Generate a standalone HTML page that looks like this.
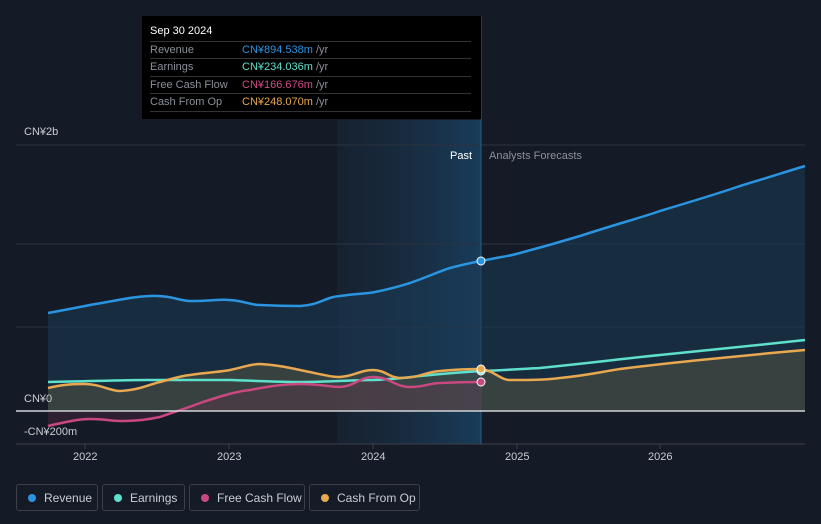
<!DOCTYPE html>
<html><head><style>
body{margin:0;width:821px;height:524px;background:#151b26;font-family:"Liberation Sans",sans-serif;overflow:hidden;position:relative}
.tt{position:absolute;left:142px;top:16px;width:339px;height:103px;background:#000;font-size:11px;color:#8a8f98}
.tt .h{position:absolute;left:8px;top:9px;color:#fff;font-size:11px}
.tt .r{position:absolute;left:8px;width:321px;height:17px;border-top:1px solid #333;line-height:17px}
.tt .r span{position:absolute;left:92px}
.lg{position:absolute;top:484px;height:27px;border:1px solid #3a3f4a;border-radius:3px;color:#c8ccd2;font-size:12px;line-height:27px;box-sizing:border-box}
.lg i{position:absolute;left:11px;top:9px;width:8px;height:8px;border-radius:50%}
.lg b{font-weight:normal;position:absolute;left:27px}
.ax{position:absolute;color:#c8ccd2;font-size:11px}
</style></head><body>
<svg width="821" height="524" style="position:absolute;left:0;top:0">
<defs>
<linearGradient id="pg" x1="0" x2="1"><stop offset="0" stop-color="#1a3046" stop-opacity=".3"/><stop offset="1" stop-color="#1a4a70" stop-opacity=".7"/></linearGradient>
</defs>
<rect x="337" y="120" width="144" height="324" fill="url(#pg)"/>
<line x1="16" y1="145" x2="805" y2="145" stroke="#2c323d"/>
<line x1="16" y1="244" x2="805" y2="244" stroke="#2c323d"/>
<line x1="16" y1="327" x2="805" y2="327" stroke="#2c323d"/>
<line x1="16" y1="444" x2="805" y2="444" stroke="#3a3f4a"/>
<g stroke="#3a3f4a"><line x1="85" y1="444" x2="85" y2="449"/><line x1="229" y1="444" x2="229" y2="449"/><line x1="373" y1="444" x2="373" y2="449"/><line x1="517" y1="444" x2="517" y2="449"/><line x1="660" y1="444" x2="660" y2="449"/></g>
<line x1="481" y1="16" x2="481" y2="444" stroke="#2a5a80"/>
<path d="M48,313 C70,309 80,307 90,305 C120,300 130,297 150,296 C170,295 180,301 190,301 C210,301 220,299 230,300 C245,301 250,305 260,305 C280,306 290,306 300,306 C320,305 325,297 340,296 C360,293 365,294 375,292 C395,288 400,286 410,283 C430,276 440,271 450,268 C465,264 470,263 481,261 C500,257 510,256 520,253 C550,245 560,242 580,236 C620,223 640,218 660,211 C700,199 720,193 740,186 C770,177 785,172 805,166 L805,411 L48,411Z" fill="#1c3a56" fill-opacity=".55"/>
<path d="M48,388 C65,384 75,384 85,384 C100,384 110,391 120,391 C140,390 150,384 160,382 C175,378 180,376 190,375 C210,372 220,372 230,370 C245,367 250,364 260,364 C280,365 290,368 300,370 C320,374 330,377 340,377 C355,376 360,370 373,370 C385,370 390,378 400,378 C420,378 425,372 440,371 C460,369 470,369 481,369 C495,371 500,380 510,380 C530,380 545,380 560,378 C590,375 600,372 620,369 C660,364 680,362 700,360 C740,356 770,353 805,350 L805,411 L48,411Z" fill="#5a5a40" fill-opacity=".45"/>
<path d="M48,426 C70,421 80,419 90,419 C105,419 110,421 120,421 C140,421 150,419 160,417 C180,410 190,407 200,403 C230,393 240,391 250,390 C270,386 285,384 300,384 C320,384 330,387 340,387 C355,386 360,377 373,377 C390,377 395,387 410,387 C425,387 430,383 440,383 C460,382 470,382 481,382 L481,411 L48,411Z" fill="#7a3050" fill-opacity=".25"/>
<g fill="none" stroke-width="2.5">
<path d="M48,313 C70,309 80,307 90,305 C120,300 130,297 150,296 C170,295 180,301 190,301 C210,301 220,299 230,300 C245,301 250,305 260,305 C280,306 290,306 300,306 C320,305 325,297 340,296 C360,293 365,294 375,292 C395,288 400,286 410,283 C430,276 440,271 450,268 C465,264 470,263 481,261 C500,257 510,256 520,253 C550,245 560,242 580,236 C620,223 640,218 660,211 C700,199 720,193 740,186 C770,177 785,172 805,166" stroke="#2a94e0"/>
<path d="M48,382 C100,381 120,380 150,380 C190,380 210,380 230,380 C260,381 280,382 300,382 C330,382 350,380 373,380 C400,379 410,377 420,376 C450,373 465,372 481,371 C510,370 520,369 540,368 C600,362 620,359 660,355 C720,349 760,345 805,340" stroke="#5ee0cc"/>
<path d="M48,426 C70,421 80,419 90,419 C105,419 110,421 120,421 C140,421 150,419 160,417 C180,410 190,407 200,403 C230,393 240,391 250,390 C270,386 285,384 300,384 C320,384 330,387 340,387 C355,386 360,377 373,377 C390,377 395,387 410,387 C425,387 430,383 440,383 C460,382 470,382 481,382" stroke="#c8487f"/>
<path d="M48,388 C65,384 75,384 85,384 C100,384 110,391 120,391 C140,390 150,384 160,382 C175,378 180,376 190,375 C210,372 220,372 230,370 C245,367 250,364 260,364 C280,365 290,368 300,370 C320,374 330,377 340,377 C355,376 360,370 373,370 C385,370 390,378 400,378 C420,378 425,372 440,371 C460,369 470,369 481,369 C495,371 500,380 510,380 C530,380 545,380 560,378 C590,375 600,372 620,369 C660,364 680,362 700,360 C740,356 770,353 805,350" stroke="#e8a850"/>
</g>
<line x1="16" y1="411" x2="805" y2="411" stroke="#d0d3d8" stroke-width="1.5"/>
<circle cx="481" cy="261" r="4" fill="#2a94e0" stroke="#fff"/>
<circle cx="481" cy="371" r="4" fill="#5ee0cc" stroke="#fff"/>
<circle cx="481" cy="369" r="4" fill="#e8a850" stroke="#fff"/>
<circle cx="481" cy="382" r="4" fill="#c8487f" stroke="#fff"/>
</svg>
<div class="ax" style="left:24px;top:126px">CN¥2b</div>
<div class="ax" style="left:24px;top:393px">CN¥0</div>
<div class="ax" style="left:24px;top:426px">-CN¥200m</div>
<div class="ax" style="left:450px;top:150px;color:#fff">Past</div>
<div class="ax" style="left:489px;top:150px;color:#8a8f98">Analysts Forecasts</div>
<div class="ax" style="left:73px;top:451px">2022</div>
<div class="ax" style="left:217px;top:451px">2023</div>
<div class="ax" style="left:361px;top:451px">2024</div>
<div class="ax" style="left:505px;top:451px">2025</div>
<div class="ax" style="left:648px;top:451px">2026</div>
<div class="tt">
<div class="h">Sep 30 2024</div>
<div class="r" style="top:25px">Revenue<span style="color:#2a94e0">CN¥894.538m <em style="font-style:normal;color:#8a8f98">/yr</em></span></div>
<div class="r" style="top:42px">Earnings<span style="color:#5ee0cc">CN¥234.036m <em style="font-style:normal;color:#8a8f98">/yr</em></span></div>
<div class="r" style="top:60px">Free Cash Flow<span style="color:#d04a88">CN¥166.676m <em style="font-style:normal;color:#8a8f98">/yr</em></span></div>
<div class="r" style="top:77px;border-bottom:1px solid #333">Cash From Op<span style="color:#e8a850">CN¥248.070m <em style="font-style:normal;color:#8a8f98">/yr</em></span></div>
</div>
<div class="lg" style="left:16px;width:82px"><i style="background:#2a94e0"></i><b>Revenue</b></div>
<div class="lg" style="left:102px;width:83px"><i style="background:#5ee0cc"></i><b>Earnings</b></div>
<div class="lg" style="left:189px;width:116px"><i style="background:#c8487f"></i><b>Free Cash Flow</b></div>
<div class="lg" style="left:309px;width:111px"><i style="background:#e8a850"></i><b>Cash From Op</b></div>
</body></html>
